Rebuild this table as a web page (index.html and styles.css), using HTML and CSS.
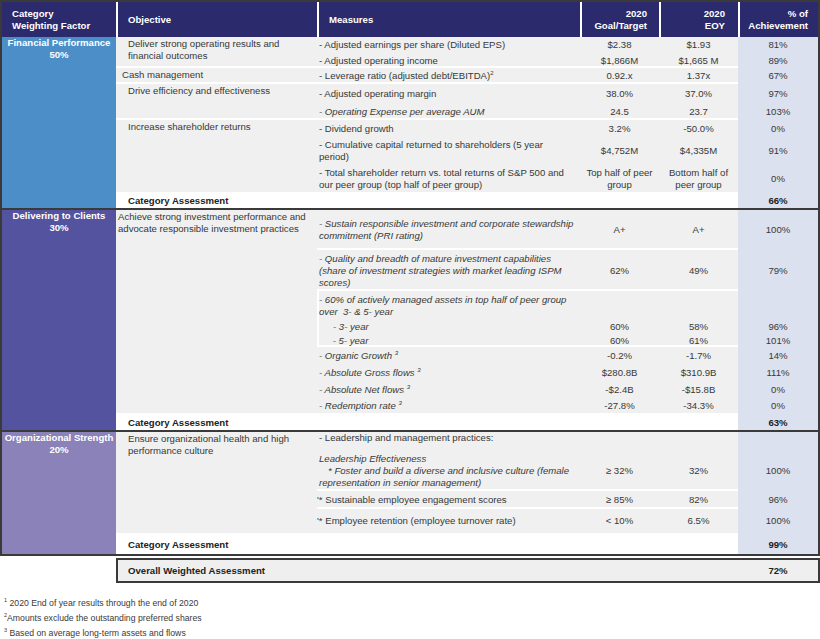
FILE: index.html
```html
<!DOCTYPE html>
<html lang="en">
<head>
<meta charset="utf-8">
<title>Scorecard</title>
<link rel="stylesheet" href="styles.css">
</head>
<body>
<table class="scorecard">
  <colgroup>
    <col class="c1"><col class="c2"><col class="c3"><col class="c4"><col class="c5"><col class="c6">
  </colgroup>
  <thead>
    <tr class="hdr">
      <th class="h-cat">Category<br>Weighting Factor</th>
      <th class="h-obj">Objective</th>
      <th class="h-meas">Measures</th>
      <th class="h-num h-goal">2020<br>Goal/Target</th>
      <th class="h-num h-eoy">2020<br>EOY</th>
      <th class="h-num h-ach">% of<br>Achievement</th>
    </tr>
  </thead>
  <tbody>
    <!-- Financial Performance -->
    <tr class="h16">
      <td class="cat fin" rowspan="9">Financial Performance<br>50%</td>
      <td class="obj sep" rowspan="2">Deliver strong operating results and<br>financial outcomes</td>
      <td class="meas">- Adjusted earnings per share (Diluted EPS)</td>
      <td class="num">$2.38</td><td class="num">$1.93</td><td class="ach">81%</td>
    </tr>
    <tr class="h15">
      <td class="meas sep">- Adjusted operating income</td>
      <td class="num sep">$1,866M</td><td class="num sep">$1,665 M</td><td class="ach">89%</td>
    </tr>
    <tr class="h16">
      <td class="obj cash sep">Cash management</td>
      <td class="meas sep">- Leverage ratio (adjusted debt/EBITDA)<sup>2</sup></td>
      <td class="num sep">0.92.x</td><td class="num sep">1.37x</td><td class="ach">67%</td>
    </tr>
    <tr class="h20">
      <td class="obj sep" rowspan="2">Drive efficiency and effectiveness</td>
      <td class="meas">- Adjusted operating margin</td>
      <td class="num">38.0%</td><td class="num">37.0%</td><td class="ach">97%</td>
    </tr>
    <tr class="h16">
      <td class="meas sep it">- Operating Expense per average AUM</td>
      <td class="num sep">24.5</td><td class="num sep">23.7</td><td class="ach">103%</td>
    </tr>
    <tr class="h17">
      <td class="obj" rowspan="3">Increase shareholder returns</td>
      <td class="meas">- Dividend growth</td>
      <td class="num">3.2%</td><td class="num">-50.0%</td><td class="ach">0%</td>
    </tr>
    <tr class="h28">
      <td class="meas">- Cumulative capital returned to shareholders (5 year<br>period)</td>
      <td class="num">$4,752M</td><td class="num">$4,335M</td><td class="ach">91%</td>
    </tr>
    <tr class="h27">
      <td class="meas">- Total shareholder return vs. total returns of S&amp;P 500 and<br>our peer group (top half of peer group)</td>
      <td class="num">Top half of peer<br>group</td><td class="num">Bottom half of<br>peer group</td><td class="ach">0%</td>
    </tr>
    <tr class="h16 assess">
      <td class="label" colspan="4">Category Assessment</td>
      <td class="ach">66%</td>
    </tr>
    <tr class="divider"><td colspan="6"></td></tr>

    <!-- Delivering to Clients -->
    <tr class="h40">
      <td class="cat cli" rowspan="10">Delivering to Clients<br>30%</td>
      <td class="obj tight" rowspan="9">Achieve strong investment performance and<br>advocate responsible investment practices</td>
      <td class="meas it sep">- Sustain responsible investment and corporate stewardship<br>commitment (PRI rating)</td>
      <td class="num sep">A+</td><td class="num sep">A+</td><td class="ach">100%</td>
    </tr>
    <tr class="h41">
      <td class="meas it sep">- Quality and breadth of mature investment capabilities<br>(share of investment strategies with market leading ISPM<br>scores)</td>
      <td class="num sep">62%</td><td class="num sep">49%</td><td class="ach">79%</td>
    </tr>
    <tr class="h29">
      <td class="meas it boxl">- 60% of actively managed assets in top half of peer group<br>over &nbsp;3- &amp; 5- year</td>
      <td class="num"></td><td class="num"></td><td class="ach"></td>
    </tr>
    <tr class="h14">
      <td class="meas it boxl"><span class="ind2">- 3- year</span></td>
      <td class="num">60%</td><td class="num">58%</td><td class="ach">96%</td>
    </tr>
    <tr class="h13">
      <td class="meas it boxl sepb">&nbsp;<span class="ind2b">- 5- year</span></td>
      <td class="num sep">60%</td><td class="num sep">61%</td><td class="ach">101%</td>
    </tr>
    <tr class="h17">
      <td class="meas it">- Organic Growth <sup>3</sup></td>
      <td class="num">-0.2%</td><td class="num">-1.7%</td><td class="ach">14%</td>
    </tr>
    <tr class="h17">
      <td class="meas it">- Absolute Gross flows <sup>3</sup></td>
      <td class="num">$280.8B</td><td class="num">$310.9B</td><td class="ach">111%</td>
    </tr>
    <tr class="h17">
      <td class="meas it">- Absolute Net flows <sup>3</sup></td>
      <td class="num">-$2.4B</td><td class="num">-$15.8B</td><td class="ach">0%</td>
    </tr>
    <tr class="h15">
      <td class="meas it">- Redemption rate <sup>3</sup></td>
      <td class="num">-27.8%</td><td class="num">-34.3%</td><td class="ach">0%</td>
    </tr>
    <tr class="h17 assess">
      <td class="label" colspan="4">Category Assessment</td>
      <td class="ach">63%</td>
    </tr>
    <tr class="divider"><td colspan="6"></td></tr>

    <!-- Organizational Strength -->
    <tr class="h19">
      <td class="cat org" rowspan="5">Organizational Strength<br>20%</td>
      <td class="obj" rowspan="4">Ensure organizational health and high<br>performance culture</td>
      <td class="meas top">- Leadership and management practices:</td>
      <td class="num"></td><td class="num"></td><td class="ach"></td>
    </tr>
    <tr class="h40">
      <td class="meas it sep">Leadership Effectiveness<br><span class="ind1">* Foster and build a diverse and inclusive culture (female</span><br>representation in senior management)</td>
      <td class="num sep">&ge; 32%</td><td class="num sep">32%</td><td class="ach">100%</td>
    </tr>
    <tr class="h18">
      <td class="meas flush sep">'* Sustainable employee engagement scores</td>
      <td class="num sep">&ge; 85%</td><td class="num sep">82%</td><td class="ach">96%</td>
    </tr>
    <tr class="h24">
      <td class="meas flush">'* Employee retention (employee turnover rate)</td>
      <td class="num">&lt; 10%</td><td class="num">6.5%</td><td class="ach">100%</td>
    </tr>
    <tr class="h21 assess">
      <td class="label" colspan="4">Category Assessment</td>
      <td class="ach">99%</td>
    </tr>
  </tbody>
</table>

<div class="overall">
  <div class="overall-label">Overall Weighted Assessment</div>
  <div class="overall-value">72%</div>
</div>

<div class="notes">
  <p><sup>1</sup> 2020 End of year results through the end of 2020</p>
  <p><sup>2</sup>Amounts exclude the outstanding preferred shares</p>
  <p><sup>3</sup> Based on average long-term assets and flows</p>
</div>
</body>
</html>
```

FILE: styles.css
```css
html, body {
  margin: 0;
  padding: 0;
  background: #ffffff;
  overflow: hidden;
}

body {
  width: 820px;
  font-family: "Liberation Sans", Arial, sans-serif;
  font-size: 9.6px;
  color: #383838;
}

.scorecard {
  width: 820px;
  box-sizing: border-box;
  table-layout: fixed;
  border-collapse: separate;
  border-spacing: 0;
  border: 2px solid #3a3a3a;
}

.c1 { width: 114px; }
.c2 { width: 201px; }
.c3 { width: 263px; }
.c4 { width: 79px; }
.c5 { width: 79px; }
.c6 { width: 80px; }

.scorecard th,
.scorecard td {
  padding: 0;
  line-height: 12px;
  white-space: nowrap;
  overflow: hidden;
}

/* header */
.hdr { height: 35px; }
.hdr th {
  background: #2b2a6c;
  color: #ffffff;
  font-weight: bold;
  text-align: left;
  vertical-align: middle;
  padding-top: 1px;
}
.h-cat { padding-left: 10px !important; }
.h-obj { padding-left: 12px !important; box-shadow: inset 2px 0 #ffffff; }
.h-meas { padding-left: 12px !important; box-shadow: inset 2px 0 #ffffff; }
.h-num { text-align: right !important; box-shadow: inset 2px 0 #ffffff; }
.h-goal { padding-right: 12px !important; }
.h-eoy { padding-right: 13px !important; }
.h-ach { padding-right: 10px !important; }

/* row heights */
.h13 { height: 13px; }
.h14 { height: 14px; }
.h15 { height: 15px; }
.h16 { height: 16px; }
.h17 { height: 17px; }
.h18 { height: 18px; }
.h19 { height: 19px; }
.h20 { height: 20px; }
.h21 { height: 21px; }
.h24 { height: 24px; }
.h27 { height: 27px; }
.h28 { height: 28px; }
.h29 { height: 29px; }
.h40 { height: 40px; }
.h41 { height: 41px; }

.divider { height: 2px; }
.divider td {
  height: 2px;
  background: #3a3a3a;
  font-size: 0;
  line-height: 0 !important;
}

/* category column */
.cat {
  color: #ffffff;
  font-weight: bold;
  text-align: center;
  vertical-align: top;
  line-height: 12.4px !important;
}
.fin { background: #4b8ec8; }
.cli { background: #5353a0; }
.org { background: #8b82ba; }

/* objective column */
.obj {
  background: #eff0ef;
  vertical-align: top;
  padding: 1px 0 0 12px !important;
}
.obj.cash { padding-left: 6px !important; }
.obj.tight { padding-left: 2px !important; }

/* measures */
.meas {
  background: #eff0ef;
  vertical-align: middle;
  padding-left: 2px !important;
}
.meas.top { vertical-align: top; }
.meas.flush { padding-left: 0 !important; }
.it { font-style: italic; }
.ind1 { padding-left: 9px; }
.ind2 { padding-left: 14px; }
.ind2b { padding-left: 11px; }

.num {
  background: #eff0ef;
  text-align: center;
  vertical-align: middle;
}

.ach {
  background: #dbe1ef;
  text-align: center;
  vertical-align: middle;
}

.sep { box-shadow: inset 0 -2px #ffffff; }
.boxl { box-shadow: inset 2px 0 #ffffff; }
.boxl.sepb { box-shadow: inset 2px 0 #ffffff, inset 0 -2px #ffffff; }

/* category assessment rows */
.assess .label {
  background: #ffffff;
  font-weight: bold;
  color: #222222;
  padding: 2px 0 0 12px !important;
  vertical-align: middle;
}
.assess .ach {
  font-weight: bold;
  color: #222222;
  padding-top: 2px !important;
}

sup {
  font-size: 6px;
  line-height: 0;
  vertical-align: 4px;
}

/* overall box */
.overall {
  margin: 2px 0 0 116px;
  width: 704px;
  height: 25px;
  box-sizing: border-box;
  border: 2px solid #3a3a3a;
  background: #eeefee;
  display: flex;
  align-items: center;
  font-weight: bold;
  color: #222222;
}
.overall-label {
  flex: 1;
  padding-left: 10px;
}
.overall-value {
  width: 80px;
  text-align: center;
}

/* footnotes */
.notes {
  margin-top: 13px;
  padding-left: 4px;
  font-size: 8.7px;
  color: #3a3a3a;
}
.notes p {
  margin: 0;
  line-height: 15px;
}
.notes sup {
  font-size: 5.5px;
  vertical-align: 4px;
}
```
